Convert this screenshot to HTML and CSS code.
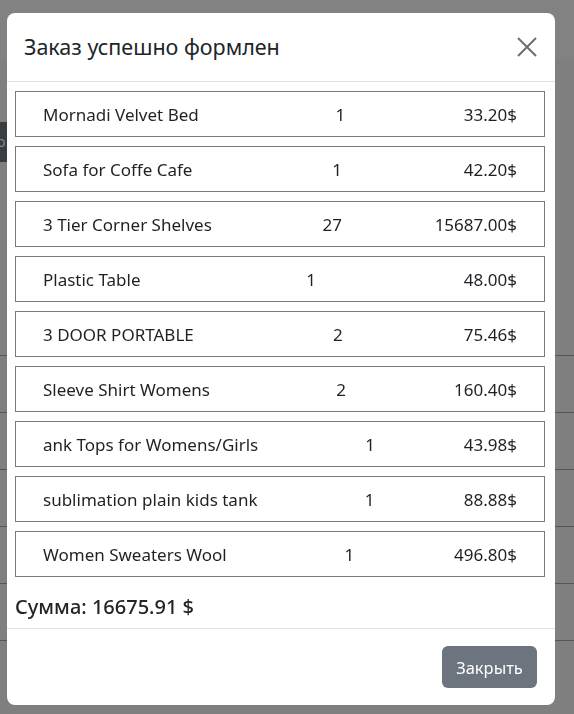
FILE: index.html
```html
<!DOCTYPE html>
<html lang="ru">
<head>
<meta charset="utf-8">
<title>Заказ</title>
<link rel="stylesheet" href="styles.css">
</head>
<body>
<div class="page">
  <div class="page-top"></div>
  <div class="page-btn">o</div>
  <div class="page-lines">
    <div class="pl"></div><div class="pl"></div><div class="pl"></div><div class="pl"></div><div class="pl"></div><div class="pl"></div>
  </div>
</div>
<div class="overlay">
  <div class="dialog">
    <div class="header">
      <h4 class="title">Заказ успешно формлен</h4>
      <button class="close" aria-label="close">
        <svg width="20" height="20" viewBox="0 0 20 20"><path d="M1 1 L19 19 M19 1 L1 19" stroke="#6e6e6e" stroke-width="2" fill="none"/></svg>
      </button>
    </div>
    <div class="body">
      <div class="row"><span class="name">Mornadi Velvet Bed</span><span class="qty">1</span><span class="price">33.20$</span></div>
      <div class="row"><span class="name">Sofa for Coffe Cafe</span><span class="qty">1</span><span class="price">42.20$</span></div>
      <div class="row"><span class="name">3 Tier Corner Shelves</span><span class="qty">27</span><span class="price">15687.00$</span></div>
      <div class="row"><span class="name">Plastic Table</span><span class="qty">1</span><span class="price">48.00$</span></div>
      <div class="row"><span class="name">3 DOOR PORTABLE</span><span class="qty">2</span><span class="price">75.46$</span></div>
      <div class="row"><span class="name">Sleeve Shirt Womens</span><span class="qty">2</span><span class="price">160.40$</span></div>
      <div class="row"><span class="name">ank Tops for Womens/Girls</span><span class="qty">1</span><span class="price">43.98$</span></div>
      <div class="row"><span class="name">sublimation plain kids tank</span><span class="qty">1</span><span class="price">88.88$</span></div>
      <div class="row"><span class="name">Women Sweaters Wool</span><span class="qty">1</span><span class="price">496.80$</span></div>
      <div class="sum">Сумма: 16675.91 $</div>
    </div>
    <div class="footer">
      <button class="btn">Закрыть</button>
    </div>
  </div>
</div>
</body>
</html>
```
FILE: styles.css
```css
html, body {
  margin: 0;
  padding: 0;
}
body {
  background: #7f7f7f;
  font-family: "Noto Sans", "Open Sans", sans-serif;
  color: #212529;
  width: 574px;
  height: 714px;
  overflow: hidden;
}
.page {
  height: 714px;
  overflow: hidden;
}
.page-top {
  height: 60px;
  background: #828282;
}
.page-btn {
  margin-top: 62px;
  width: 10px;
  height: 40px;
  background: #3a3d42;
  color: #888;
  font-size: 14px;
  line-height: 40px;
  overflow: hidden;
  text-indent: -3px;
}
.page-lines {
  margin-top: 193px;
}
.pl {
  height: 57px;
  border-top: 1px solid #555;
  box-sizing: border-box;
}
.overlay {
  position: fixed;
  inset: 0;
  padding: 13px 19px 0 7px;
}
.dialog {
  width: 548px;
  height: 692px;
  background: #fff;
  border-radius: 8px;
  display: flex;
  flex-direction: column;
}
.header {
  height: 69px;
  box-sizing: border-box;
  border-bottom: 1px solid #dee2e6;
  display: flex;
  align-items: center;
  justify-content: space-between;
  padding: 0 18px 0 17px;
}
.title {
  margin: 0;
  font-size: 21.5px;
  font-weight: 400;
  line-height: 1.2;
  color: #212529;
}
.close {
  border: 0;
  background: none;
  padding: 0;
  width: 20px;
  height: 20px;
  display: flex;
}
.body {
  padding: 9px 10px 0 8px;
  display: flex;
  flex-direction: column;
  gap: 9px;
  flex: 1;
}
.row {
  height: 46px;
  box-sizing: border-box;
  border: 1px solid #7a7a7a;
  display: flex;
  align-items: center;
  justify-content: space-between;
  padding: 0 27px;
  font-size: 17px;
  color: #1e2125;
}
.qty {
  margin-left: 18px;
}
.sum {
  margin-top: 6px;
  font-size: 20px;
  font-weight: 500;
  line-height: 30px;
}
.footer {
  height: 77px;
  box-sizing: border-box;
  border-top: 1px solid #dee2e6;
  display: flex;
  justify-content: flex-end;
  align-items: flex-start;
  padding: 17px 18px 0 0;
}
.btn {
  background: #6c757d;
  color: #fff;
  border: 0;
  border-radius: 6px;
  height: 42px;
  width: 95px;
  font-family: "Noto Sans", "Open Sans", sans-serif;
  font-size: 16.5px;
}
```
